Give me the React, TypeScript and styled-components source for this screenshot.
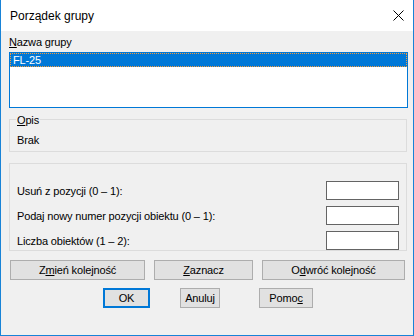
import React from "react";
import styled, { createGlobalStyle } from "styled-components";

const GlobalStyle = createGlobalStyle`
  body {
    margin: 0;
    background: #ffffff;
  }
  * {
    box-sizing: border-box;
  }
`;

const Dialog = () => {
  return (
    <Window>
      <TitleBar>
        <Title>Porządek grupy</Title>
        <CloseIcon width="11" height="11" viewBox="0 0 11 11">
          <path d="M0.5 0.5 L10.5 10.5 M10.5 0.5 L0.5 10.5" stroke="#000" strokeWidth="1" fill="none" />
        </CloseIcon>
      </TitleBar>
      <Body>
        <FieldLabel>
          <Mn>N</Mn>azwa grupy
        </FieldLabel>
        <ListBox>
          <ListItem>FL-25</ListItem>
        </ListBox>
        <DescGroup>
          <Legend>
            <Mn>O</Mn>pis
          </Legend>
          <DescText>Brak</DescText>
        </DescGroup>
        <ParamGroup>
          <ParamRow>
            <span>Usuń z pozycji (0 – 1):</span>
            <NumInput />
          </ParamRow>
          <ParamRow>
            <span>Podaj nowy numer pozycji obiektu (0 – 1):</span>
            <NumInput />
          </ParamRow>
          <ParamRow>
            <span>Liczba obiektów (1 – 2):</span>
            <NumInput />
          </ParamRow>
        </ParamGroup>
        <ActionRow>
          <Button $w={135}>
            Z<Mn>m</Mn>ień kolejność
          </Button>
          <Button $w={99}>
            <Mn>Z</Mn>aznacz
          </Button>
          <Button $w={143}>
            O<Mn>d</Mn>wróć kolejność
          </Button>
        </ActionRow>
        <FooterRow>
          <Button $w={47} $default>
            OK
          </Button>
          <Button $w={40} $ml={30}>
            Anuluj
          </Button>
          <Button $w={54} $ml={39}>
            Pomo<Mn>c</Mn>
          </Button>
        </FooterRow>
      </Body>
    </Window>
  );
};

export default function App() {
  return (
    <>
      <GlobalStyle />
      <Dialog />
    </>
  );
}

const Window = styled.div`
  width: 414px;
  height: 336px;
  display: flex;
  flex-direction: column;
  background: #f0f0f0;
  border: 1px solid #1883d7;
  border-top: none;
  font-family: "Liberation Sans", Arial, sans-serif;
  font-size: 11px;
  letter-spacing: -0.15px;
  color: #000;
`;

const TitleBar = styled.div`
  height: 31px;
  flex-shrink: 0;
  display: flex;
  align-items: center;
  justify-content: space-between;
  padding: 0 9px 0 9px;
  background: #ffffff;
`;

const Title = styled.span`
  font-size: 12px;
  letter-spacing: 0;
`;

const CloseIcon = styled.svg`
  display: block;
`;

const Body = styled.div`
  display: flex;
  flex-direction: column;
  padding: 0 5px 0 8px;
`;

const Mn = styled.span`
  text-decoration: underline;
`;

const FieldLabel = styled.div`
  margin-top: 5px;
  line-height: 13px;
`;

const ListBox = styled.div`
  margin-top: 3px;
  height: 56px;
  border: 1px solid #0078d7;
  background: #ffffff;
`;

const ListItem = styled.div`
  height: 14px;
  padding-left: 2px;
  line-height: 12px;
  background: #0078d7;
  color: #ffffff;
  border: 1px dotted #f59c3c;
`;

const GroupBox = styled.div`
  margin-top: 11px;
  margin-right: 1px;
  display: flex;
  flex-direction: column;
  border: 1px solid #dcdcdc;
`;

const DescGroup = styled(GroupBox)`
  padding-bottom: 4px;
`;

const Legend = styled.div`
  align-self: flex-start;
  margin: -6px 0 0 6px;
  padding: 0 1px;
  line-height: 13px;
  background: #f0f0f0;
`;

const DescText = styled.div`
  margin-top: 7px;
  padding-left: 7px;
  line-height: 13px;
`;

const ParamGroup = styled(GroupBox)`
  padding: 17px 7px 0 7px;
  gap: 6px;
`;

const ParamRow = styled.div`
  height: 19px;
  display: flex;
  align-items: center;
  justify-content: space-between;
`;

const NumInput = styled.input`
  width: 73px;
  height: 19px;
  margin: 0;
  padding: 0 2px;
  border: 1px solid #646464;
  background: #ffffff;
  font-family: inherit;
  font-size: 11px;
  outline: none;
`;

const ActionRow = styled.div`
  display: flex;
  gap: 9px;
  margin-top: 9px;
  padding-left: 1px;
`;

const FooterRow = styled.div`
  display: flex;
  margin-top: 8px;
  padding-left: 94px;
`;

const Button = styled.button<{ $w: number; $ml?: number; $default?: boolean }>`
  width: ${(p) => p.$w}px;
  height: 20px;
  margin: 0 0 0 ${(p) => p.$ml ?? 0}px;
  padding: 0;
  background: #e1e1e1;
  border: ${(p) => (p.$default ? "2px solid #0078d7" : "1px solid #adadad")};
  font-family: inherit;
  font-size: 11px;
  letter-spacing: -0.15px;
  line-height: 13px;
  color: #000;
`;
